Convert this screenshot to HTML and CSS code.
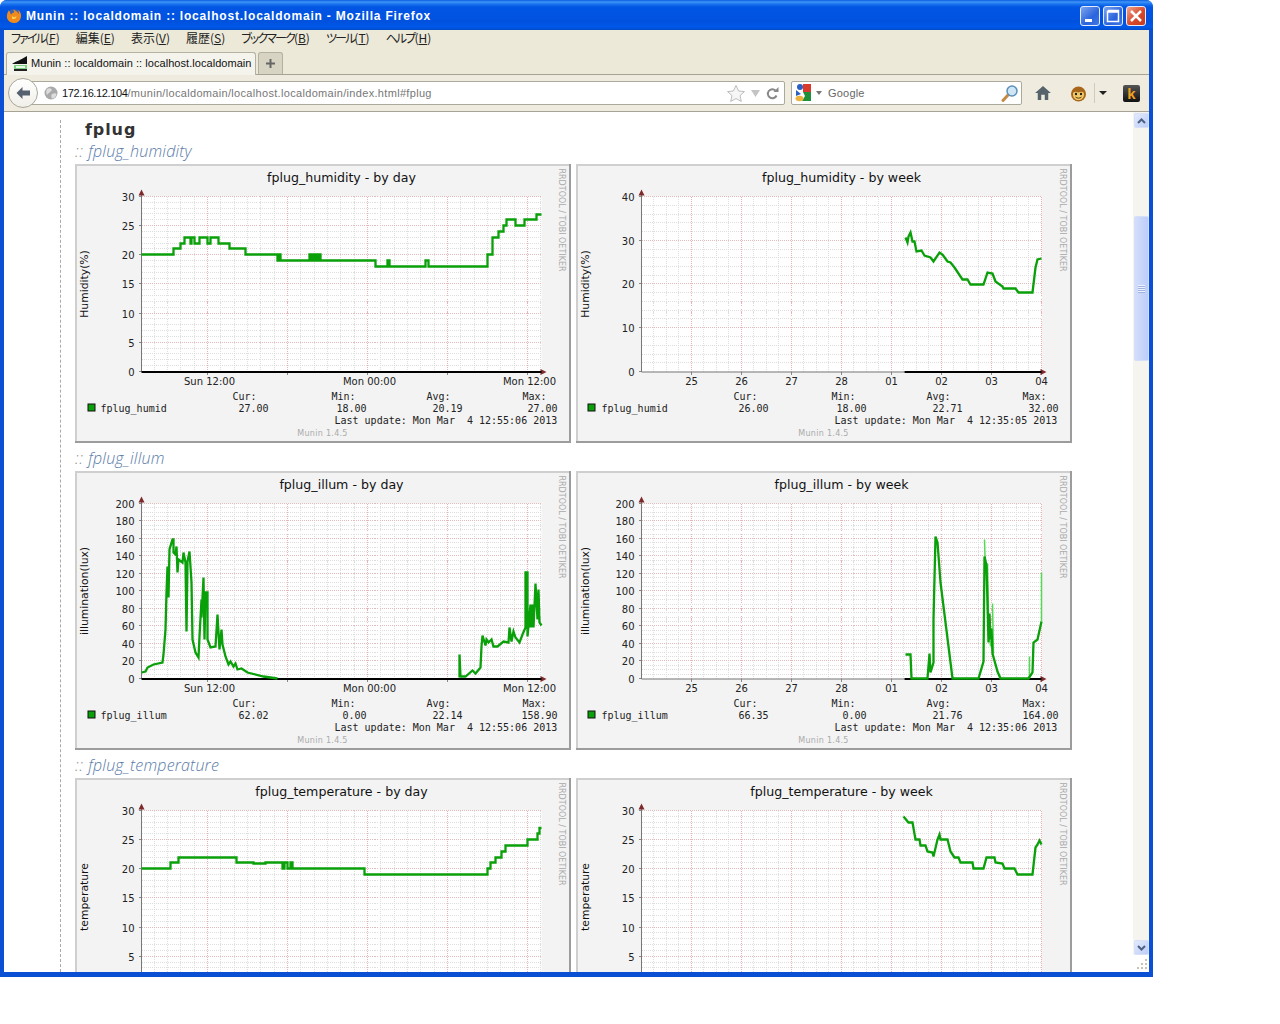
FILE: index.html
```html
<!DOCTYPE html>
<html lang="ja">
<head>
<meta charset="utf-8">
<title>Munin :: localdomain :: localhost.localdomain</title>
<link rel="stylesheet" href="styles.css">
</head>
<body>
<svg class="defs" width="0" height="0" aria-hidden="true">
  <defs>
    <g id="v-day">
      <path class="g-min" d="M13 0V175M26 0V175M39 0V175M53 0V175M79 0V175M93 0V175M106 0V175M119 0V175M133 0V175M159 0V175M173 0V175M186 0V175M199 0V175M213 0V175M239 0V175M253 0V175M266 0V175M279 0V175M293 0V175M319 0V175M333 0V175M346 0V175M359 0V175M373 0V175M399 0V175"/>
      <path class="g-maj" d="M66 0V175M146 0V175M226 0V175M306 0V175M386 0V175"/>
      <path class="tick" d="M66 175V178M146 175V178M226 175V178M306 175V178M386 175V178"/>
    </g>
    <g id="v-week">
      <path class="g-min" d="M12 0V175M25 0V175M37 0V175M62 0V175M75 0V175M87 0V175M112 0V175M125 0V175M137 0V175M162 0V175M175 0V175M187 0V175M212 0V175M225 0V175M237 0V175M262 0V175M275 0V175M287 0V175M312 0V175M325 0V175M337 0V175M362 0V175M375 0V175M387 0V175"/>
      <path class="g-maj" d="M50 0V175M100 0V175M150 0V175M200 0V175M250 0V175M300 0V175M350 0V175M400 0V175"/>
      <path class="tick" d="M50 175V178M100 175V178M150 175V178M200 175V178M250 175V178M300 175V178M350 175V178M400 175V178"/>
    </g>
    <g id="h-30">
      <path class="g-min" d="M0 6H400M0 12H400M0 17H400M0 23H400M0 35H400M0 41H400M0 47H400M0 52H400M0 64H400M0 70H400M0 76H400M0 82H400M0 93H400M0 99H400M0 105H400M0 111H400M0 122H400M0 128H400M0 134H400M0 140H400M0 152H400M0 157H400M0 163H400M0 169H400"/>
      <path class="g-mah" d="M0 0H400M0 29H400M0 58H400M0 87H400M0 117H400M0 146H400"/>
      <path class="tick" d="M-3 0H0M-3 29H0M-3 58H0M-3 87H0M-3 117H0M-3 146H0M-3 175H0"/>
    </g>
    <g id="h-40">
      <path class="g-min" d="M0 9H400M0 18H400M0 26H400M0 35H400M0 53H400M0 61H400M0 70H400M0 79H400M0 96H400M0 105H400M0 114H400M0 122H400M0 140H400M0 149H400M0 158H400M0 166H400"/>
      <path class="g-mah" d="M0 0H400M0 44H400M0 87H400M0 131H400"/>
      <path class="tick" d="M-3 0H0M-3 44H0M-3 87H0M-3 131H0M-3 175H0"/>
    </g>
    <g id="h-200">
      <path class="g-min" d="M0 4H400M0 9H400M0 13H400M0 22H400M0 26H400M0 31H400M0 39H400M0 44H400M0 48H400M0 57H400M0 61H400M0 66H400M0 74H400M0 79H400M0 83H400M0 92H400M0 96H400M0 101H400M0 109H400M0 114H400M0 118H400M0 127H400M0 131H400M0 136H400M0 144H400M0 149H400M0 153H400M0 162H400M0 166H400M0 171H400"/>
      <path class="g-mah" d="M0 0H400M0 17H400M0 35H400M0 52H400M0 70H400M0 87H400M0 105H400M0 122H400M0 140H400M0 157H400"/>
      <path class="tick" d="M-3 0H0M-3 17H0M-3 35H0M-3 52H0M-3 70H0M-3 87H0M-3 105H0M-3 122H0M-3 140H0M-3 157H0M-3 175H0"/>
    </g>
    <g id="axes">
      <path class="y-axis" d="M0 -3V175"/>
      <path class="arrow" d="M0 -7L3 -1H-3Z"/>
      <path class="arrow" d="M405 175.500L399 172.500V178.500Z"/>
    </g>
    <g id="frame">
      <rect class="frame-bg" width="496" height="279"/>
      <path class="frame-lt" d="M1 278V1H495"/>
      <path class="frame-dk" d="M0 278H495V0"/>
    </g>
  </defs>
</svg>

<div class="window">
  <header class="titlebar">
    <svg class="ff-icon" width="16" height="16" viewBox="0 0 16 16">
      <circle cx="8" cy="8" r="7" fill="#3a62b0"/>
      <path d="M3 2C1 5 0 9 2 12C4 15 9 16 12 14C15 12 16 7 14 4C13.500 3 12.500 2 12 2C13 4 13 5 12.500 6C11.500 3.500 9 2 7 2C8 3 8.500 4 8 4.500C6.500 4.500 5.500 5.500 5.500 6.500C4.500 6 4 5 4 4C3.500 3.500 3 3 3 2Z" fill="#f08a1d"/>
      <path d="M6 8C7 9.500 9.500 9.500 10.500 8C10.500 10.500 8 12 6 10.500Z" fill="#fcd34f"/>
    </svg>
    <span class="title-text">Munin :: localdomain :: localhost.localdomain - Mozilla Firefox</span>
    <div class="win-buttons">
      <span class="win-btn"><svg width="18" height="18" viewBox="0 0 18 18"><rect x="4" y="12" width="7" height="3" fill="#fff"/></svg></span>
      <span class="win-btn"><svg width="18" height="18" viewBox="0 0 18 18"><path d="M4 3.500H14.500V14.500H3.500V3.500M3.500 5H14.500" fill="none" stroke="#fff" stroke-width="1.500"/></svg></span>
      <span class="win-btn win-close"><svg width="18" height="18" viewBox="0 0 18 18"><path d="M4 4L14 14M14 4L4 14" fill="none" stroke="#fff" stroke-width="2.500"/></svg></span>
    </div>
  </header>

  <div class="browser">
    <nav class="menubar">
      <span class="menu-item"><span class="kana">ファイル</span>(<u>F</u>)</span>
      <span class="menu-item">編集(<u>E</u>)</span>
      <span class="menu-item">表示(<u>V</u>)</span>
      <span class="menu-item">履歴(<u>S</u>)</span>
      <span class="menu-item"><span class="kana">ブックマーク</span>(<u>B</u>)</span>
      <span class="menu-item"><span class="kana">ツール</span>(<u>T</u>)</span>
      <span class="menu-item"><span class="kana">ヘルプ</span>(<u>H</u>)</span>
    </nav>

    <div class="tabstrip">
      <div class="tab">
        <svg class="favicon" width="16" height="16" viewBox="0 0 16 16">
          <rect x="2" y="10" width="13" height="5" fill="#7fd07f"/>
          <rect x="4" y="11" width="9" height="2" fill="#e8f8e8"/>
          <path d="M0 9C4 6 9 5 15 1V9Z" fill="#111"/>
          <rect x="2" y="14" width="13" height="2" fill="#222"/>
        </svg>
        <span class="tab-label">Munin :: localdomain :: localhost.localdomain</span>
      </div>
      <div class="newtab"><svg width="11" height="11" viewBox="0 0 11 11"><path d="M5.500 1V10M1 5.500H10" stroke="#666" stroke-width="2"/></svg></div>
    </div>

    <div class="navbar">
      <div class="back">
        <svg width="16" height="14" viewBox="0 0 16 14"><path d="M7.500 1L1.500 7L7.500 13V9.500H15V4.500H7.500Z" fill="#56616f"/></svg>
      </div>
      <div class="urlbar">
        <svg class="globe" width="14" height="14" viewBox="0 0 14 14">
          <circle cx="7" cy="7" r="6.500" fill="#a9a9a9"/>
          <path d="M3 3C5 2 7 2 8 4C7 6 4 7 3 9C2 7 2 5 3 3ZM8 8C10 7 12 7 12.500 8C12 11 10 12.500 8 12.500C7 11 7 9 8 8Z" fill="#dcdcdc"/>
        </svg>
        <span class="url"><span class="url-host">172.16.12.104</span>/munin/localdomain/localhost.localdomain/index.html#fplug</span>
        <svg class="star" width="20" height="19" viewBox="0 0 20 19"><path d="M10 1.500L12.600 7L18.500 7.600L14 11.600L15.300 17.500L10 14.500L4.700 17.500L6 11.600L1.500 7.600L7.400 7Z" fill="#f6f6f6" stroke="#bdbdbd"/></svg>
        <svg class="drop" width="9" height="7" viewBox="0 0 9 7"><path d="M0 0H9L4.500 7Z" fill="#c4c4c4"/></svg>
        <svg class="reload" width="13" height="13" viewBox="0 0 13 13"><path d="M10.500 8.500A4.500 4.500 0 1 1 9.500 3.500" fill="none" stroke="#888" stroke-width="2"/><path d="M7.500 5H12.500V0Z" fill="#888"/></svg>
      </div>
      <div class="searchbar">
        <svg class="g-icon" width="17" height="18" viewBox="0 0 17 18">
          <rect x="8" y="0" width="8" height="8" fill="#d93a2b"/>
          <path d="M8 8H16V17H7L10 12Z" fill="#1f8f3a"/>
          <circle cx="5" cy="3" r="3" fill="#2a5fc4"/>
          <path d="M1 6L6 10L1 12Z" fill="#2a5fc4"/>
          <ellipse cx="4.500" cy="14.500" rx="4" ry="2.800" fill="#eeb33c"/>
        </svg>
        <svg class="g-drop" width="6" height="4" viewBox="0 0 6 4"><path d="M0 0H6L3 4Z" fill="#777"/></svg>
        <span class="search-text">Google</span>
        <svg class="magnifier" width="18" height="19" viewBox="0 0 18 19">
          <path d="M7 11L2 16.500" stroke="#c48a45" stroke-width="3" stroke-linecap="round"/>
          <circle cx="11" cy="7" r="5" fill="#cfe6f7" stroke="#5b90b8" stroke-width="1.500"/>
        </svg>
      </div>
      <svg class="home" width="16" height="14" viewBox="0 0 18 16"><path d="M9 0L18 8H15V16H11V10H7V16H3V8H0Z" fill="#56636b"/></svg>
      <svg class="monkey" width="17" height="17" viewBox="0 0 17 17">
        <circle cx="8.500" cy="9" r="7.500" fill="#a8651c"/>
        <path d="M3 9C3 6.500 6 6 8.500 7.500C11 6 14 6.500 14 9C14 13 11.500 15 8.500 15C5.500 15 3 13 3 9Z" fill="#f2cc6a"/>
        <circle cx="6" cy="9" r="1.200" fill="#222"/><circle cx="11" cy="9" r="1.200" fill="#222"/>
        <path d="M5.500 12C7 13.500 10 13.500 11.500 12" fill="none" stroke="#5a3410"/>
      </svg>
      <span class="nav-sep"></span>
      <svg class="nav-drop" width="8" height="4" viewBox="0 0 8 4"><path d="M0 0H8L4 4Z" fill="#222"/></svg>
      <span class="k-icon">k</span>
    </div>

    <div class="viewport">
      <main class="page">
        <h2 class="heading">fplug</h2>

        <section class="service">
          <h3 class="service-title"><span class="colons">:: </span>fplug_humidity</h3>
          <div class="graph-row">
            <svg class="graph" width="496" height="279" viewBox="0 0 496 279">
              <use href="#frame"/>
              <g transform="translate(66.5 32.5)">
                <rect class="plot" width="400" height="175"/>
                <use href="#v-day"/><use href="#h-30"/><use href="#axes"/>
                <path class="zero" d="M0 175.500H400"/>
                <path class="line" d="M0 58H32V52H39V47H43V41H49V47H50V41H53V47H58V41H66V47H69V41H77V47H88V52H104V58H136V64H137V58H139V64H168V58H170V64H171V58H173V64H174V58H176V64H177V58H179V64H234V70H246V64H248V70H284V64H287V70H346V58H351V41H357V35H362V29H365V23H374V29H383V23H395V18H400"/>
                <text class="chart-title" x="200" y="-15">fplug_humidity - by day</text>
                <text class="brand" transform="translate(417 -28) rotate(90)">RRDTOOL / TOBI OETIKER</text>
                <text class="axis-name" transform="translate(-54 87.500) rotate(-90)">Humidity(%)</text>
                <text class="ty" x="-7" y="4">30</text><text class="ty" x="-7" y="33">25</text><text class="ty" x="-7" y="62">20</text><text class="ty" x="-7" y="91">15</text><text class="ty" x="-7" y="121">10</text><text class="ty" x="-7" y="150">5</text><text class="ty" x="-7" y="179">0</text>
                <text class="tx" x="68" y="188">Sun 12:00</text><text class="tx" x="228" y="188">Mon 00:00</text><text class="tx" x="388" y="188">Mon 12:00</text>
                <rect class="swatch" x="-53.500" y="207.500" width="7" height="7"/>
                <text class="mono" x="-41" y="215">fplug_humid</text>
                <text class="mono" x="91" y="203">Cur:</text><text class="mono" x="97" y="215">27.00</text>
                <text class="mono" x="190" y="203">Min:</text><text class="mono" x="195" y="215">18.00</text>
                <text class="mono" x="285" y="203">Avg:</text><text class="mono" x="291" y="215">20.19</text>
                <text class="mono" x="381" y="203">Max:</text><text class="mono" x="386" y="215">27.00</text>
                <text class="mono" x="193" y="227">Last update: Mon Mar  4 12:55:06 2013</text>
                <text class="munin" x="181" y="239">Munin 1.4.5</text>
              </g>
            </svg>
            <svg class="graph" width="496" height="279" viewBox="0 0 496 279">
              <use href="#frame"/>
              <g transform="translate(65.5 32.5)">
                <rect class="plot" width="400" height="175"/>
                <use href="#v-week"/><use href="#h-40"/><use href="#axes"/>
                <path class="base" d="M0 175.500H263"/><path class="zero" d="M263 175.500H400"/>
                <path class="line" d="M264 41L266 46L267 40L269 36L271 45L273 45L275 55L280 54L283 59L289 61L292 65L298 56L301 58L306 65L309 66L313 71L321 83L326 83L329 88L342 88L346 76L351 77L354 85L361 90L362 92L374 92L377 96L391 96L394 71L396 63L400 62"/>
                <text class="chart-title" x="200" y="-15">fplug_humidity - by week</text>
                <text class="brand" transform="translate(418 -28) rotate(90)">RRDTOOL / TOBI OETIKER</text>
                <text class="axis-name" transform="translate(-53 87.500) rotate(-90)">Humidity(%)</text>
                <text class="ty" x="-7" y="4">40</text><text class="ty" x="-7" y="48">30</text><text class="ty" x="-7" y="91">20</text><text class="ty" x="-7" y="135">10</text><text class="ty" x="-7" y="179">0</text>
                <text class="tx" x="50" y="188">25</text><text class="tx" x="100" y="188">26</text><text class="tx" x="150" y="188">27</text><text class="tx" x="200" y="188">28</text><text class="tx" x="250" y="188">01</text><text class="tx" x="300" y="188">02</text><text class="tx" x="350" y="188">03</text><text class="tx" x="400" y="188">04</text>
                <rect class="swatch" x="-53.500" y="207.500" width="7" height="7"/>
                <text class="mono" x="-40" y="215">fplug_humid</text>
                <text class="mono" x="92" y="203">Cur:</text><text class="mono" x="97" y="215">26.00</text>
                <text class="mono" x="190" y="203">Min:</text><text class="mono" x="195" y="215">18.00</text>
                <text class="mono" x="285" y="203">Avg:</text><text class="mono" x="291" y="215">22.71</text>
                <text class="mono" x="381" y="203">Max:</text><text class="mono" x="387" y="215">32.00</text>
                <text class="mono" x="193" y="227">Last update: Mon Mar  4 12:35:05 2013</text>
                <text class="munin" x="182" y="239">Munin 1.4.5</text>
              </g>
            </svg>
          </div>
        </section>

        <section class="service">
          <h3 class="service-title"><span class="colons">:: </span>fplug_illum</h3>
          <div class="graph-row">
            <svg class="graph" width="496" height="279" viewBox="0 0 496 279">
              <use href="#frame"/>
              <g transform="translate(66.5 32.5)">
                <rect class="plot" width="400" height="175"/>
                <use href="#v-day"/><use href="#h-200"/><use href="#axes"/>
                <path class="zero" d="M0 175.500H400"/>
                <path class="line" d="M0 169L4 168L6 164L12 161L21 159L22 151L24 126L25 89L26 63L27 94L28 46L31 36L32 36L32 49L34 51L35 43L36 69L37 56L41 59L42 49L44 59L45 128L46 58L48 48L50 79L51 136L54 149L57 154L58 133L60 96L60 114L62 74L63 136L64 89L66 89L66 136L69 144L74 143L76 111L78 146L80 126L81 141L84 153L87 161L89 158L92 163L94 160L96 166L100 165L106 169L122 173L136 175M318 174L318 151L319 173L324 173L331 167L334 170L339 164L340 143L341 132L344 142L345 136L347 139L350 136L352 143L356 143L362 138L367 139L368 124L370 138L372 128L374 134L378 139L381 131L384 124L384 69L386 69L386 133L389 101L389 124L390 101L391 124L392 101L392 124L394 80L396 116L397 86L398 119L400 122"/>
                <text class="chart-title" x="200" y="-15">fplug_illum - by day</text>
                <text class="brand" transform="translate(417 -28) rotate(90)">RRDTOOL / TOBI OETIKER</text>
                <text class="axis-name" transform="translate(-54 87.500) rotate(-90)">illumination(lux)</text>
                <text class="ty" x="-7" y="4">200</text><text class="ty" x="-7" y="21">180</text><text class="ty" x="-7" y="39">160</text><text class="ty" x="-7" y="56">140</text><text class="ty" x="-7" y="74">120</text><text class="ty" x="-7" y="91">100</text><text class="ty" x="-7" y="109">80</text><text class="ty" x="-7" y="126">60</text><text class="ty" x="-7" y="144">40</text><text class="ty" x="-7" y="161">20</text><text class="ty" x="-7" y="179">0</text>
                <text class="tx" x="68" y="188">Sun 12:00</text><text class="tx" x="228" y="188">Mon 00:00</text><text class="tx" x="388" y="188">Mon 12:00</text>
                <rect class="swatch" x="-53.500" y="207.500" width="7" height="7"/>
                <text class="mono" x="-41" y="215">fplug_illum</text>
                <text class="mono" x="91" y="203">Cur:</text><text class="mono" x="97" y="215">62.02</text>
                <text class="mono" x="190" y="203">Min:</text><text class="mono" x="201" y="215">0.00</text>
                <text class="mono" x="285" y="203">Avg:</text><text class="mono" x="291" y="215">22.14</text>
                <text class="mono" x="381" y="203">Max:</text><text class="mono" x="380" y="215">158.90</text>
                <text class="mono" x="193" y="227">Last update: Mon Mar  4 12:55:06 2013</text>
                <text class="munin" x="181" y="239">Munin 1.4.5</text>
              </g>
            </svg>
            <svg class="graph" width="496" height="279" viewBox="0 0 496 279">
              <use href="#frame"/>
              <g transform="translate(65.5 32.5)">
                <rect class="plot" width="400" height="175"/>
                <use href="#v-week"/><use href="#h-200"/><use href="#axes"/>
                <path class="base" d="M0 175.500H263"/><path class="zero" d="M263 175.500H400"/>
                <path class="line-max" d="M343 36L344 70L346 60L347 110L349 143M351 100L352 150M388 153V175M400 69V118"/>
                <path class="line" d="M264 151L269 151L270 175L286 175L288 150L289 169L292 159L292 116L294 33L296 39L299 79L311 175L337 175L342 158L343 53L345 62L346 100L347 139L348 110L349 136L350 125L351 150L356 168L359 175L387 175L391 169L392 139L396 136L400 118"/>
                <text class="chart-title" x="200" y="-15">fplug_illum - by week</text>
                <text class="brand" transform="translate(418 -28) rotate(90)">RRDTOOL / TOBI OETIKER</text>
                <text class="axis-name" transform="translate(-53 87.500) rotate(-90)">illumination(lux)</text>
                <text class="ty" x="-7" y="4">200</text><text class="ty" x="-7" y="21">180</text><text class="ty" x="-7" y="39">160</text><text class="ty" x="-7" y="56">140</text><text class="ty" x="-7" y="74">120</text><text class="ty" x="-7" y="91">100</text><text class="ty" x="-7" y="109">80</text><text class="ty" x="-7" y="126">60</text><text class="ty" x="-7" y="144">40</text><text class="ty" x="-7" y="161">20</text><text class="ty" x="-7" y="179">0</text>
                <text class="tx" x="50" y="188">25</text><text class="tx" x="100" y="188">26</text><text class="tx" x="150" y="188">27</text><text class="tx" x="200" y="188">28</text><text class="tx" x="250" y="188">01</text><text class="tx" x="300" y="188">02</text><text class="tx" x="350" y="188">03</text><text class="tx" x="400" y="188">04</text>
                <rect class="swatch" x="-53.500" y="207.500" width="7" height="7"/>
                <text class="mono" x="-40" y="215">fplug_illum</text>
                <text class="mono" x="92" y="203">Cur:</text><text class="mono" x="97" y="215">66.35</text>
                <text class="mono" x="190" y="203">Min:</text><text class="mono" x="201" y="215">0.00</text>
                <text class="mono" x="285" y="203">Avg:</text><text class="mono" x="291" y="215">21.76</text>
                <text class="mono" x="381" y="203">Max:</text><text class="mono" x="381" y="215">164.00</text>
                <text class="mono" x="193" y="227">Last update: Mon Mar  4 12:35:06 2013</text>
                <text class="munin" x="182" y="239">Munin 1.4.5</text>
              </g>
            </svg>
          </div>
        </section>

        <section class="service">
          <h3 class="service-title"><span class="colons">:: </span>fplug_temperature</h3>
          <div class="graph-row">
            <svg class="graph" width="496" height="279" viewBox="0 0 496 279">
              <use href="#frame"/>
              <g transform="translate(66.5 32.5)">
                <rect class="plot" width="400" height="175"/>
                <use href="#v-day"/><use href="#h-30"/><use href="#axes"/>
                <path class="line" d="M0 58H29V52H37V47H95V52H112V53H124V52H141V58H143V52H146V58H149V52H151V58H155V58H223V64H346V58H349V52H354V47H360V41H364V35H382V35H386V29H396V23H398V17.500H400"/>
                <text class="chart-title" x="200" y="-15">fplug_temperature - by day</text>
                <text class="brand" transform="translate(417 -28) rotate(90)">RRDTOOL / TOBI OETIKER</text>
                <text class="axis-name" transform="translate(-54 86.500) rotate(-90)">temperature</text>
                <text class="ty" x="-7" y="4">30</text><text class="ty" x="-7" y="33">25</text><text class="ty" x="-7" y="62">20</text><text class="ty" x="-7" y="91">15</text><text class="ty" x="-7" y="121">10</text><text class="ty" x="-7" y="150">5</text>
              </g>
            </svg>
            <svg class="graph" width="496" height="279" viewBox="0 0 496 279">
              <use href="#frame"/>
              <g transform="translate(65.5 32.5)">
                <rect class="plot" width="400" height="175"/>
                <use href="#v-week"/><use href="#h-30"/><use href="#axes"/>
                <path class="line" d="M262 6L267 12L271 12L274 29L278 29L279 35L284 35L286 41L291 42L292 46L296 29L298 24L299 29L306 29L309 41L313 47L317 47L319 52L331 52L332 58L342 58L345 47L353 47L354 52L361 53L363 58L373 58L376 64L391 64L394 37L396 34L398 30L400 34"/>
                <text class="chart-title" x="200" y="-15">fplug_temperature - by week</text>
                <text class="brand" transform="translate(418 -28) rotate(90)">RRDTOOL / TOBI OETIKER</text>
                <text class="axis-name" transform="translate(-53 86.500) rotate(-90)">temperature</text>
                <text class="ty" x="-7" y="4">30</text><text class="ty" x="-7" y="33">25</text><text class="ty" x="-7" y="62">20</text><text class="ty" x="-7" y="91">15</text><text class="ty" x="-7" y="121">10</text><text class="ty" x="-7" y="150">5</text>
              </g>
            </svg>
          </div>
        </section>
      </main>

      <aside class="scrollbar">
        <div class="scroll-track">
          <div class="scroll-btn"><svg width="9" height="6" viewBox="0 0 9 6"><path d="M1 5L4.500 1.500L8 5" fill="none" stroke="#4d6185" stroke-width="2"/></svg></div>
          <div class="scroll-thumb"><span class="thumb-grip"></span></div>
          <div class="scroll-btn scroll-down"><svg width="9" height="6" viewBox="0 0 9 6"><path d="M1 1L4.500 4.500L8 1" fill="none" stroke="#4d6185" stroke-width="2"/></svg></div>
        </div>
        <div class="resizer">
          <svg width="11" height="11" viewBox="0 0 11 11"><path d="M8 0h2v2H8zM4 4h2v2H4zM8 4h2v2H8zM0 8h2v2H0zM4 8h2v2H4zM8 8h2v2H8z" fill="#c6c3b4"/></svg>
        </div>
      </aside>
    </div>
  </div>
</div>
</body>
</html>
```

FILE: styles.css
```css
* { box-sizing: border-box; }

html, body { margin: 0; padding: 0; background: #fff; }

.defs { position: absolute; }

.window {
  width: 1153px;
  height: 977px;
  display: flex;
  flex-direction: column;
  background: #0a4fd4;
  border-radius: 7px 7px 0 0;
  overflow: hidden;
}

/* Title bar */
.titlebar {
  height: 30px;
  flex: none;
  display: flex;
  align-items: center;
  padding: 2px 7px 0 6px;
  background: linear-gradient(#0a5de0 0, #3f95f5 2px, #1a74ee 4px, #0256e4 7px, #0052de 22px, #0058ea 27px, #004cc8 30px);
}
.ff-icon { flex: none; }
.title-text {
  margin-left: 4px;
  font: bold 12px "Liberation Sans", sans-serif;
  letter-spacing: 0.8px;
  color: #fff;
  white-space: pre;
}
.win-buttons { margin-left: auto; display: flex; gap: 3px; }
.win-btn {
  width: 20px;
  height: 20px;
  display: flex;
  align-items: center;
  justify-content: center;
  border: 1px solid #e4ecff;
  border-radius: 3px;
  background: linear-gradient(135deg, #7ea6ee, #2a63dc 60%, #3f78e6);
}
.win-close { background: linear-gradient(135deg, #f0a58c, #d8492a 55%, #c63a1c); }

.browser {
  flex: 1;
  min-height: 0;
  margin: 0 4px 5px;
  display: flex;
  flex-direction: column;
  background: #ece9d8;
}

/* Menu */
.menubar {
  height: 22px;
  flex: none;
  display: flex;
  align-items: center;
  gap: 16px;
  padding: 0 0 6px 7px;
  font: 12px/16px "Noto Sans CJK JP", sans-serif;
  font-feature-settings: "palt";
  color: #222;
}
.kana { letter-spacing: -1.900px; }

/* Tabs */
.tabstrip {
  height: 23px;
  flex: none;
  display: flex;
  align-items: flex-end;
  gap: 2px;
  padding-left: 2px;
  border-bottom: 1px solid #a5a394;
}
.tab {
  width: 250px;
  height: 23px;
  margin-bottom: -1px;
  display: flex;
  align-items: center;
  gap: 3px;
  padding: 0 0 2px 5px;
  background: #f4f3ec;
  border: 1px solid #b3b1a2;
  border-bottom: none;
  border-radius: 3px 3px 0 0;
}
.favicon { flex: none; }
.tab-label {
  font: 11px "Liberation Sans", sans-serif;
  letter-spacing: 0.05px;
  color: #111;
  white-space: pre;
}
.newtab {
  width: 25px;
  height: 22px;
  display: flex;
  align-items: center;
  justify-content: center;
  background: #d7d4c4;
  border: 1px solid #b3b1a2;
  border-bottom: none;
  border-radius: 3px 3px 0 0;
}

/* Navigation */
.navbar {
  height: 37px;
  flex: none;
  display: flex;
  align-items: center;
  padding-left: 4px;
  background: #efecdf;
  border-bottom: 1px solid #a5a394;
}
.back {
  width: 30px;
  height: 30px;
  flex: none;
  z-index: 1;
  display: flex;
  align-items: center;
  justify-content: center;
  background: linear-gradient(#fff, #f0efe8);
  border: 1px solid #a8a79c;
  border-radius: 50%;
}
.urlbar {
  width: 755px;
  height: 24px;
  margin-left: -8px;
  flex: none;
  display: flex;
  align-items: center;
  padding-left: 13px;
  background: #fff;
  border: 1px solid #aaa99c;
  border-radius: 2px;
}
.globe { flex: none; }
.url {
  margin: 0 0 1px 4px;
  font: 11px "Liberation Sans", sans-serif;
  letter-spacing: 0.32px;
  color: #777;
  white-space: pre;
}
.url-host { color: #111; letter-spacing: -0.38px; }
.star { margin-left: auto; }
.drop { margin-left: 5px; }
.reload { margin: 0 5px 0 6px; }

.searchbar {
  width: 231px;
  height: 24px;
  margin-left: 6px;
  flex: none;
  display: flex;
  align-items: center;
  padding-left: 3px;
  background: #fff;
  border: 1px solid #aaa99c;
  border-radius: 2px;
}
.g-drop { margin-left: 4px; }
.search-text {
  margin: 0 0 1px 6px;
  font: 11px "Liberation Sans", sans-serif;
  letter-spacing: 0.2px;
  color: #666;
}
.magnifier { margin-left: auto; margin-right: 2px; }
.home { margin-left: 13px; flex: none; }
.monkey { margin-left: 19px; flex: none; }
.nav-sep { width: 1px; height: 20px; margin-left: 7px; background: #cfccbc; }
.nav-drop { margin-left: 4px; flex: none; }
.k-icon {
  width: 17px;
  height: 17px;
  margin-left: 16px;
  flex: none;
  display: flex;
  align-items: center;
  justify-content: center;
  background: linear-gradient(#555, #111);
  border-radius: 2px;
  font: bold 15px "Liberation Sans", sans-serif;
  color: #f0a020;
}

/* Page */
.viewport {
  flex: 1;
  min-height: 0;
  display: flex;
  background: #fff;
}
.page {
  flex: 1;
  min-width: 0;
  overflow: hidden;
  margin: 8px 0 0 56px;
  padding-left: 14px;
  border-left: 1px dashed #aaa;
}
.heading {
  height: 20px;
  margin: 0 0 1px 10px;
  font: bold 16px/20px "DejaVu Sans", sans-serif;
  letter-spacing: 0.9px;
  color: #333;
}
.service { margin-bottom: 5px; }
.service-title {
  height: 20px;
  margin: 0 0 3px;
  font: italic 300 16px/20px "Open Sans", sans-serif;
  letter-spacing: 0.2px;
  color: #587aa8;
}
.colons { color: #8a8a8a; letter-spacing: 0.6px; }
.graph-row { display: flex; gap: 5px; }
.graph { display: block; flex: none; }

/* Graph internals */
.frame-bg { fill: #f3f3f3; }
.frame-lt { fill: none; stroke: #cfcfcf; stroke-width: 2; }
.frame-dk { fill: none; stroke: #9c9c9c; stroke-width: 2; }
.plot { fill: #fff; }
.g-min, .g-mah, .g-maj {
  fill: none;
  stroke-dasharray: 1 1;
  shape-rendering: crispEdges;
}
.g-min { stroke: #dedede; }
.g-mah { stroke: #e0bcbc; }
.g-maj { stroke: #eeb0b8; }
.tick { stroke: #888; fill: none; shape-rendering: crispEdges; }
.y-axis { stroke: #777; fill: none; shape-rendering: crispEdges; }
.arrow { fill: #7f2a2a; }
.zero { stroke: #000; stroke-width: 2; fill: none; }
.base { stroke: #777; stroke-width: 1; fill: none; }
.line { fill: none; stroke: #0aa00a; stroke-width: 2.300; }
.line-max { fill: none; stroke: #55d855; stroke-width: 1.500; }
.swatch { fill: #0aa00a; stroke: #111; }

.chart-title {
  font: 12.600px "DejaVu Sans", sans-serif;
  text-anchor: middle;
  fill: #111;
}
.axis-name {
  font: 10.800px "DejaVu Sans", sans-serif;
  text-anchor: middle;
  fill: #111;
}
.brand {
  font: 8px "DejaVu Sans", sans-serif;
  fill: #aaa;
}
.ty {
  font: 10px "DejaVu Sans", sans-serif;
  text-anchor: end;
  fill: #222;
}
.tx {
  font: 10px "DejaVu Sans", sans-serif;
  text-anchor: middle;
  fill: #222;
}
.mono {
  font: 10px "DejaVu Sans Mono", monospace;
  white-space: pre;
  fill: #222;
}
.munin {
  font: 8px "DejaVu Sans", sans-serif;
  letter-spacing: 0.3px;
  text-anchor: middle;
  fill: #aaa;
}

/* Scrollbar */
.scrollbar {
  width: 16px;
  flex: none;
  display: flex;
  flex-direction: column;
}
.scroll-track {
  flex: 1;
  min-height: 0;
  display: flex;
  flex-direction: column;
  align-items: center;
  padding-top: 1px;
  background: #f5f4ee;
}
.scroll-btn {
  width: 15px;
  height: 15px;
  flex: none;
  display: flex;
  align-items: center;
  justify-content: center;
  background: linear-gradient(135deg, #e2eafd, #bccdf6);
  border: 1px solid #d7e0f7;
  border-radius: 2px;
}
.scroll-thumb {
  width: 15px;
  height: 145px;
  margin-top: 88px;
  flex: none;
  display: flex;
  align-items: center;
  justify-content: center;
  background: linear-gradient(90deg, #d3defb, #bccdf8);
  border: 1px solid #d5dff8;
  border-radius: 2px;
}
.thumb-grip {
  width: 7px;
  height: 8px;
  background: repeating-linear-gradient(#eef2fe 0 1px, #9fb3e0 1px 2px);
}
.scroll-down { margin-top: auto; }
.resizer {
  height: 17px;
  flex: none;
  display: flex;
  justify-content: flex-end;
  align-items: flex-end;
  padding: 0 1px 2px 0;
  background: #fff;
}
```
